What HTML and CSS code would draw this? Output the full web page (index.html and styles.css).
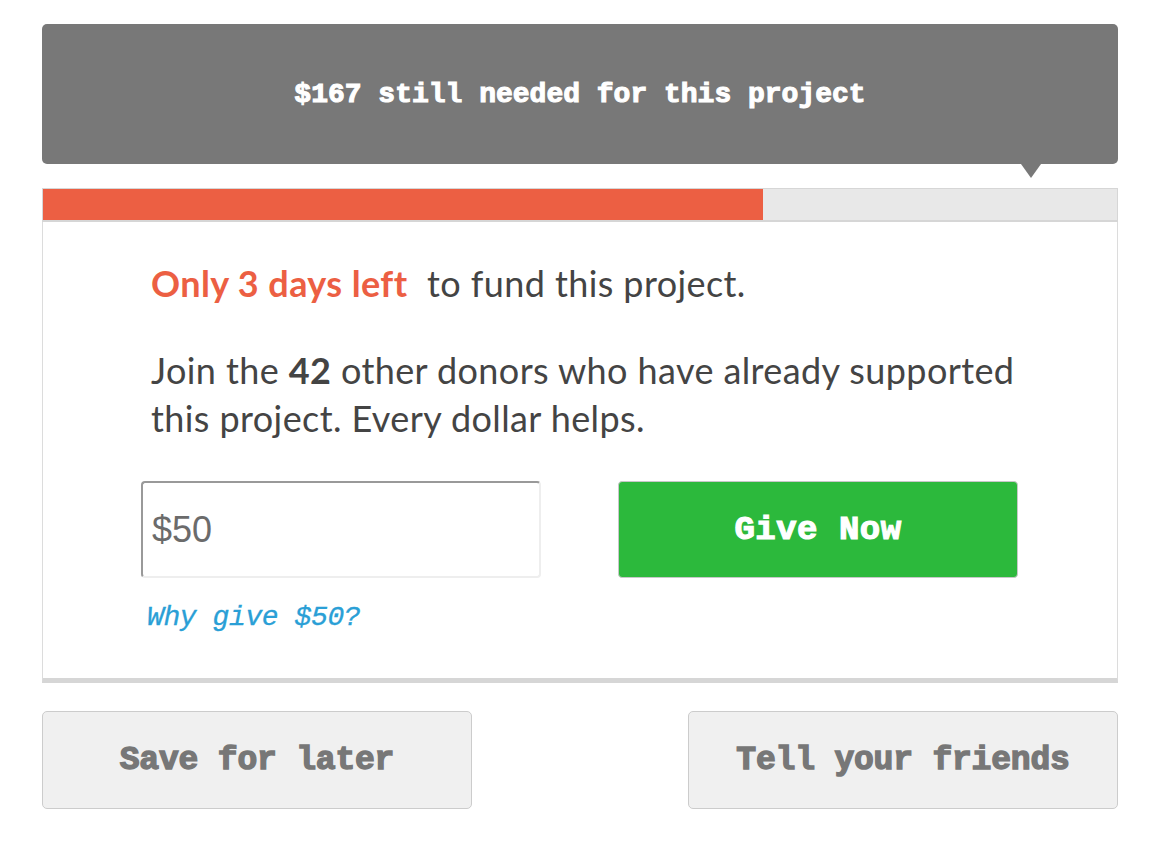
FILE: index.html
```html
<!DOCTYPE html>
<html lang="en">
<head>
<meta charset="utf-8">
<title>Fund this project</title>
<link rel="stylesheet" href="styles.css">
</head>
<body>
<div class="widget">
  <div class="needed">
    <h2 class="needed-text">$167 still needed for this project</h2>
  </div>
  <div class="progress"><div class="progress-fill" style="width: 67%"></div></div>
  <div class="card">
    <p class="deadline"><span class="urgent">Only 3 days left</span> to fund this project.</p>
    <p class="donors">Join the <strong>42</strong> other donors who have already supported this project. Every dollar helps.</p>
    <div class="give-row">
      <input class="amount" type="text" value="$50">
      <button class="give-btn">Give Now</button>
    </div>
    <a class="why" href="#">Why give $50?</a>
  </div>
  <div class="actions">
    <button class="action-btn">Save for later</button>
    <button class="action-btn">Tell your friends</button>
  </div>
</div>
</body>
</html>
```

FILE: styles.css
```css
* { box-sizing: border-box; }
html, body { margin: 0; padding: 0; background: #fff; }
body { font-family: Lato, "Open Sans", sans-serif; color: #444; }

.widget {
  width: 1076px;
  margin: 24px 0 0 42px;
}

.needed {
  position: relative;
  height: 140px;
  background: #787878;
  border-radius: 5px;
  display: flex;
  align-items: center;
  justify-content: center;
}
.needed::after {
  content: "";
  position: absolute;
  right: 77px;
  bottom: -14px;
  border-left: 10px solid transparent;
  border-right: 10px solid transparent;
  border-top: 14px solid #787878;
}
.needed-text {
  margin: 0;
  color: #fff;
  font-family: "Liberation Mono", "Courier New", monospace;
  font-weight: bold;
  font-size: 28px;
  letter-spacing: 0;
  -webkit-text-stroke: 1.1px #fff;
}

.progress {
  margin-top: 24px;
  height: 34px;
  background: #e8e8e8;
  border: 1px solid #d6d6d6;
  border-bottom-width: 2px;
}
.progress-fill {
  height: 100%;
  background: #ec5f43;
}

.card {
  border: 1px solid #dcdcdc;
  border-top: none;
  border-bottom: 5px solid #d6d6d6;
  padding: 37px 99px 40px 98px;
}
.deadline, .donors {
  margin: 0;
  padding-left: 10px;
  font-size: 36px;
  line-height: 48px;
  letter-spacing: 0.4px;
}
.deadline { margin-bottom: 39px; }
.urgent { color: #ec5f43; font-weight: bold; margin-right: 10px; }
.donors strong { font-weight: bold; }

.give-row {
  display: flex;
  justify-content: space-between;
  margin-top: 39px;
}
.amount {
  width: 400px;
  height: 97px;
  border: 2px solid #eeeeee;
  border-top-color: #999;
  border-left-color: #999;
  border-radius: 4px;
  padding: 0 9px;
  font-family: "Liberation Sans", Arial, sans-serif;
  font-size: 36px;
  color: #6b6b6b;
  outline: none;
}
.give-btn {
  width: 400px;
  height: 97px;
  background: #2cb93c;
  border: 1px solid #c8c8c8;
  border-radius: 4px;
  color: #fff;
  font-family: "Liberation Mono", "Courier New", monospace;
  font-weight: bold;
  font-size: 34px;
  letter-spacing: 0.5px;
  -webkit-text-stroke: 1.2px #fff;
  cursor: pointer;
}

.why {
  display: block;
  margin-top: 20px;
  padding-left: 6px;
  color: #2a9fd6;
  text-decoration: none;
  font-family: "Liberation Mono", "Courier New", monospace;
  font-style: italic;
  font-size: 28px;
  line-height: 40px;
  letter-spacing: -0.4px;
  -webkit-text-stroke: 0.3px #2a9fd6;
}

.actions {
  display: flex;
  justify-content: space-between;
  margin-top: 28px;
}
.action-btn {
  width: 430px;
  height: 98px;
  background: #f0f0f0;
  border: 1px solid #cccccc;
  border-radius: 5px;
  color: #777;
  font-family: "Liberation Mono", "Courier New", monospace;
  font-weight: bold;
  font-size: 33px;
  letter-spacing: -0.2px;
  -webkit-text-stroke: 1.4px #777;
  cursor: pointer;
}
```
